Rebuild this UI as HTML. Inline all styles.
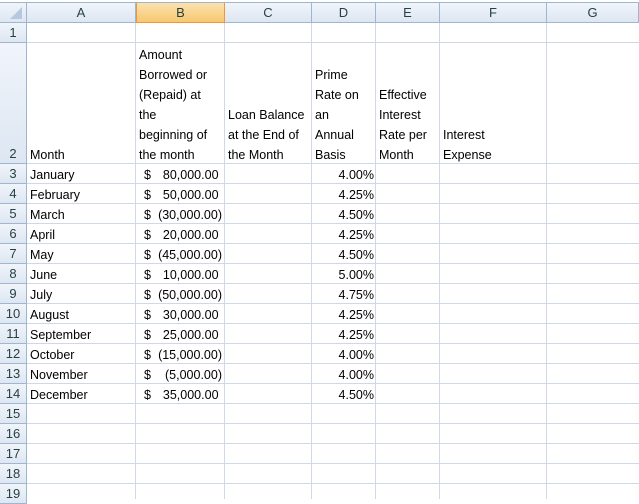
<!DOCTYPE html>
<html><head><style>
*{margin:0;padding:0;box-sizing:border-box}
body{width:639px;height:499px;overflow:hidden;background:#fff;font-family:"Liberation Sans",sans-serif;font-size:12.5px;color:#000;position:relative}
.h{position:absolute;background:linear-gradient(#f1f5fb,#dde6f2);border-right:1px solid #9eb6ce;border-bottom:1px solid #9eb6ce;color:#27413e;text-align:center;font-size:13px}
.sel{background:linear-gradient(#fbe2ae,#f6c872);border:1px solid #f29536;border-top:0}
.vl{position:absolute;top:23px;bottom:0;width:1px;background:#d0d7e5}
.hl{position:absolute;left:27px;right:0;height:1px;background:#d0d7e5}
.c{position:absolute;white-space:nowrap;line-height:20px;padding-left:3px;top:1px}
.r{position:absolute;text-align:right;white-space:nowrap;line-height:20px}
</style></head><body>
<div style="position:absolute;left:0;top:0;width:639px;height:3px;background:#fff;border-bottom:1px solid #9eb6ce"></div>
<div class="h" style="left:0;top:3px;width:27px;height:20px"><svg width="26" height="19"><polygon points="22,4 22,16 10,16" fill="#b7c7dd"/></svg></div>
<div class="h" style="left:27px;top:3px;width:109px;height:20px;line-height:19px">A</div>
<div class="h sel" style="left:136px;top:3px;width:89px;height:20px;line-height:19px">B</div>
<div class="h" style="left:225px;top:3px;width:87px;height:20px;line-height:19px">C</div>
<div class="h" style="left:312px;top:3px;width:64px;height:20px;line-height:19px">D</div>
<div class="h" style="left:376px;top:3px;width:64px;height:20px;line-height:19px">E</div>
<div class="h" style="left:440px;top:3px;width:107px;height:20px;line-height:19px">F</div>
<div class="h" style="left:547px;top:3px;width:92px;height:20px;line-height:19px">G</div>
<div class="vl" style="left:135px"></div><div class="vl" style="left:224px"></div><div class="vl" style="left:311px"></div><div class="vl" style="left:375px"></div><div class="vl" style="left:439px"></div><div class="vl" style="left:546px"></div>
<div class="h" style="left:0;top:23px;width:27px;height:20px;line-height:20px">1</div>
<div class="h" style="left:0;top:43px;width:27px;height:121px;line-height:20px;padding-top:101px">2</div>
<div class="hl" style="top:42px"></div><div class="hl" style="top:163px"></div>
<div class="h" style="left:0;top:164px;width:27px;height:20px;line-height:20px">3</div><div class="hl" style="top:183px"></div>
<div class="h" style="left:0;top:184px;width:27px;height:20px;line-height:20px">4</div><div class="hl" style="top:203px"></div>
<div class="h" style="left:0;top:204px;width:27px;height:20px;line-height:20px">5</div><div class="hl" style="top:223px"></div>
<div class="h" style="left:0;top:224px;width:27px;height:20px;line-height:20px">6</div><div class="hl" style="top:243px"></div>
<div class="h" style="left:0;top:244px;width:27px;height:20px;line-height:20px">7</div><div class="hl" style="top:263px"></div>
<div class="h" style="left:0;top:264px;width:27px;height:20px;line-height:20px">8</div><div class="hl" style="top:283px"></div>
<div class="h" style="left:0;top:284px;width:27px;height:20px;line-height:20px">9</div><div class="hl" style="top:303px"></div>
<div class="h" style="left:0;top:304px;width:27px;height:20px;line-height:20px">10</div><div class="hl" style="top:323px"></div>
<div class="h" style="left:0;top:324px;width:27px;height:20px;line-height:20px">11</div><div class="hl" style="top:343px"></div>
<div class="h" style="left:0;top:344px;width:27px;height:20px;line-height:20px">12</div><div class="hl" style="top:363px"></div>
<div class="h" style="left:0;top:364px;width:27px;height:20px;line-height:20px">13</div><div class="hl" style="top:383px"></div>
<div class="h" style="left:0;top:384px;width:27px;height:20px;line-height:20px">14</div><div class="hl" style="top:403px"></div>
<div class="h" style="left:0;top:404px;width:27px;height:20px;line-height:20px">15</div><div class="hl" style="top:423px"></div>
<div class="h" style="left:0;top:424px;width:27px;height:20px;line-height:20px">16</div><div class="hl" style="top:443px"></div>
<div class="h" style="left:0;top:444px;width:27px;height:20px;line-height:20px">17</div><div class="hl" style="top:463px"></div>
<div class="h" style="left:0;top:464px;width:27px;height:20px;line-height:20px">18</div><div class="hl" style="top:483px"></div>
<div class="h" style="left:0;top:484px;width:27px;height:20px;line-height:20px">19</div>
<div class="c" style="left:27px;top:145px">Month</div>
<div class="c" style="left:136px;top:45px">Amount<br>Borrowed or<br>(Repaid) at<br>the<br>beginning of<br>the month</div>
<div class="c" style="left:225px;top:105px">Loan Balance<br>at the End of<br>the Month</div>
<div class="c" style="left:312px;top:65px">Prime<br>Rate on<br>an<br>Annual<br>Basis</div>
<div class="c" style="left:376px;top:85px">Effective<br>Interest<br>Rate per<br>Month</div>
<div class="c" style="left:440px;top:125px">Interest<br>Expense</div>
<div class="c" style="left:27px;top:165px">January<br>February<br>March<br>April<br>May<br>June<br>July<br>August<br>September<br>October<br>November<br>December</div>
<div class="c" style="left:141px;top:165px">$<br>$<br>$<br>$<br>$<br>$<br>$<br>$<br>$<br>$<br>$<br>$</div>
<div class="r" style="left:140px;width:82px;top:165px">80,000.00&nbsp;<br>50,000.00&nbsp;<br>(30,000.00)<br>20,000.00&nbsp;<br>(45,000.00)<br>10,000.00&nbsp;<br>(50,000.00)<br>30,000.00&nbsp;<br>25,000.00&nbsp;<br>(15,000.00)<br>(5,000.00)<br>35,000.00&nbsp;</div>
<div class="r" style="left:312px;width:62px;top:165px">4.00%<br>4.25%<br>4.50%<br>4.25%<br>4.50%<br>5.00%<br>4.75%<br>4.25%<br>4.25%<br>4.00%<br>4.00%<br>4.50%</div>
</body></html>
